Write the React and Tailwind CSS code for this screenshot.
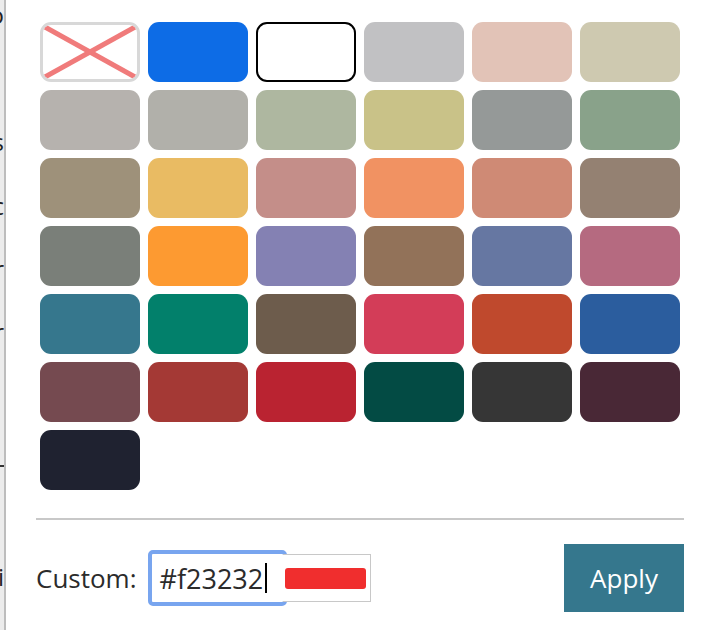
export default function App() {
  const rows = [
    ["none", "#0d6ce6", "white", "#c1c1c3", "#e2c3b7", "#cec9b0"],
    ["#b6b2ae", "#b1b0aa", "#aeb7a0", "#c9c288", "#959998", "#89a28a"],
    ["#9e917a", "#e9bb63", "#c48e89", "#f19262", "#cf8a75", "#948172"],
    ["#7a7f79", "#fd9a31", "#8481b3", "#927259", "#6677a2", "#b56a80"],
    ["#36778d", "#02806b", "#6d5c4c", "#d33d58", "#bf492d", "#2b5d9e"],
    ["#754a50", "#a43935", "#ba2331", "#034b44", "#363636", "#492836"],
    ["#1f2230"],
  ];
  const swatches = rows.flat();
  const font = { fontFamily: '"Open Sans", "Noto Sans", sans-serif' };
  return (
    <div className="flex h-[630px] w-[708px] bg-white overflow-hidden" style={font}>
      <div className="relative w-[4px] shrink-0 overflow-hidden bg-[#ececec] text-[24px] text-[#222]">
        <span className="absolute top-[3px] right-0 leading-none">o</span>
        <span className="absolute top-[130px] right-0 leading-none">s</span>
        <span className="absolute top-[194px] right-0 leading-none">c</span>
        <span className="absolute top-[257px] right-0 leading-none">r</span>
        <span className="absolute top-[320px] right-0 leading-none">r</span>
        <div className="absolute top-[465px] left-0 h-[2px] w-full bg-[#333]"></div>
        <span className="absolute top-[565px] right-0 leading-none">i</span>
      </div>
      <div className="w-[2px] shrink-0 bg-[#bdbdbd]"></div>
      <div className="flex-1 pl-[30px] pr-[24px] pt-[22px]">
        <div className="grid grid-cols-[repeat(6,100px)] gap-[8px] pl-[4px]">
          {swatches.map((c, i) => {
            if (c === "none") {
              return (
                <div key={i} className="relative h-[60px] rounded-[11px] border-[3px] border-[#d8d8d8] bg-white overflow-hidden">
                  <svg className="absolute inset-0" width="94" height="54" viewBox="0 0 94 54">
                    <line x1="2" y1="2" x2="92" y2="52" stroke="#f07b7b" strokeWidth="5" />
                    <line x1="92" y1="2" x2="2" y2="52" stroke="#f07b7b" strokeWidth="5" />
                  </svg>
                </div>
              );
            }
            if (c === "white") {
              return <div key={i} className="h-[60px] rounded-[11px] border-2 border-black bg-white"></div>;
            }
            return <div key={i} className="h-[60px] rounded-[11px]" style={{ backgroundColor: c }}></div>;
          })}
        </div>
        <div className="mt-[28px] h-[2px] bg-[#c8c8c8]"></div>
        <div className="mt-[24px] flex items-center justify-between">
          <div className="flex items-center">
            <span className="text-[26px] text-[#2b2b2b] leading-none">Custom:</span>
            <div className="ml-[11px] flex items-center">
              <div className="flex h-[56px] w-[139px] items-center rounded-[5px] border-[4px] border-[#78a5ef] bg-white pl-[8px]">
                <span className="text-[27px] text-[#2b2b2b] leading-none">#f23232</span>
                <span className="ml-[2px] h-[30px] w-[2px] bg-black"></span>
              </div>
              <div className="relative z-10 -ml-[4px] flex h-[48px] w-[88px] items-center border-y border-r border-[#c8c8c8] bg-white pl-[2px]">
                <div className="h-[21px] w-[81px] rounded-[3px] bg-[#f02e2e]"></div>
              </div>
            </div>
          </div>
          <button className="h-[68px] w-[120px] bg-[#35778d] text-[26px] text-white">Apply</button>
        </div>
      </div>
    </div>
  );
}
